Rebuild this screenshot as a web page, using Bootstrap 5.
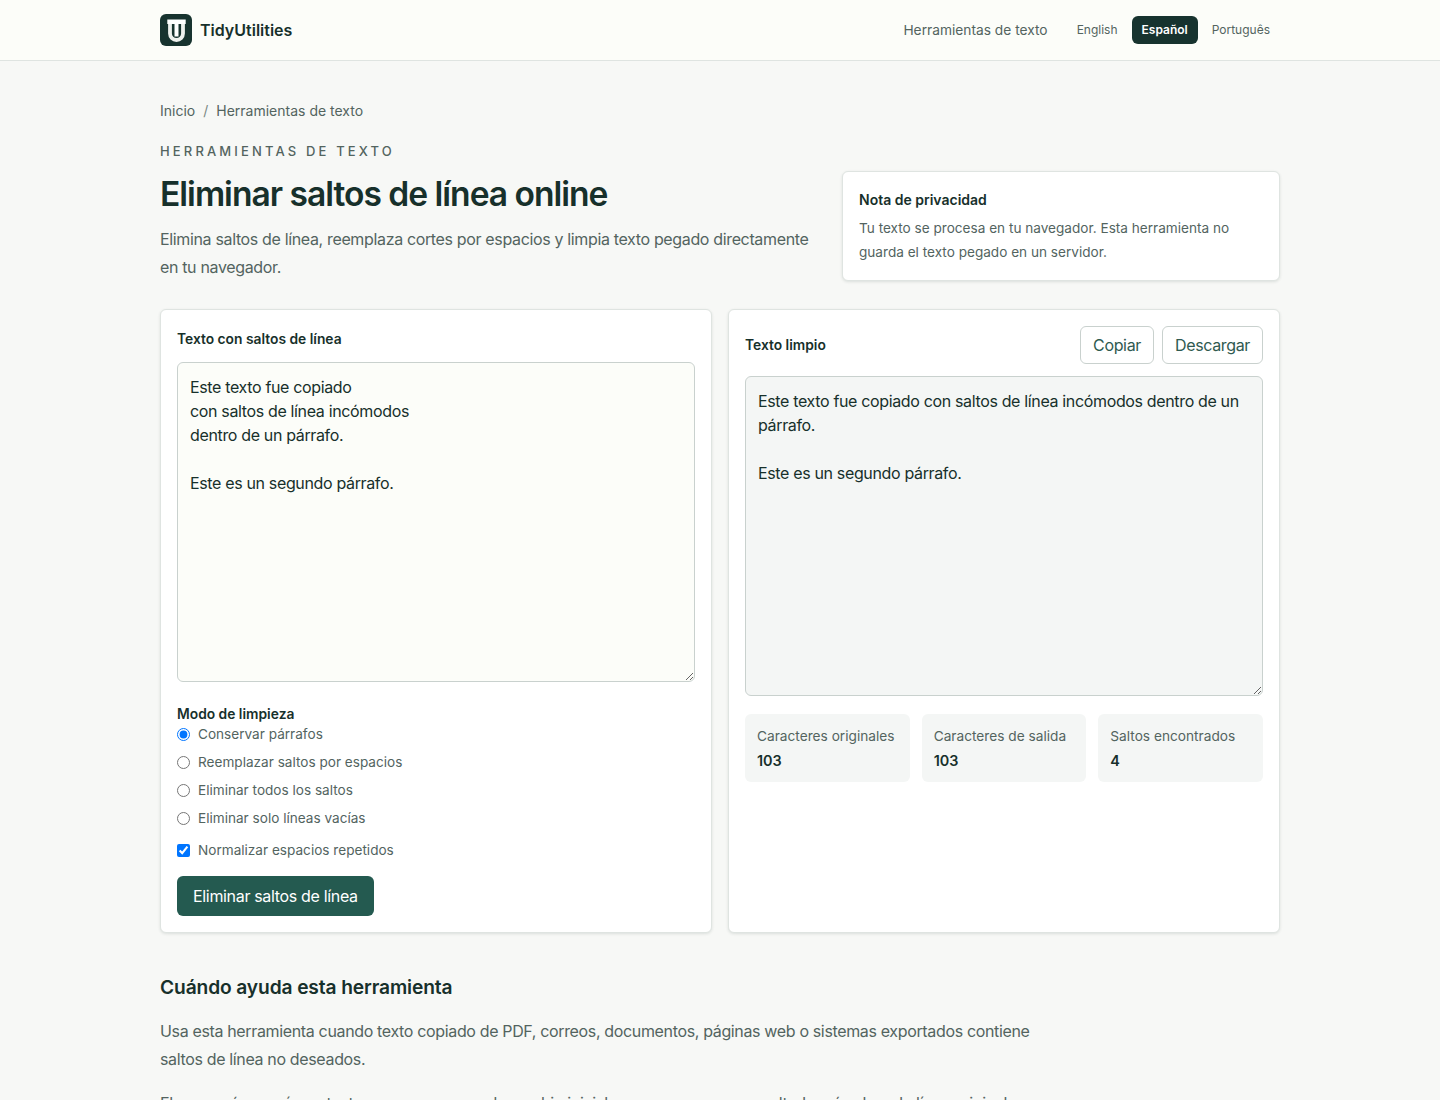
<!doctype html>
<html lang="es">
<head>
<meta charset="utf-8">
<title>Eliminar saltos de línea online</title>
<link rel="stylesheet" href="https://cdn.jsdelivr.net/npm/bootstrap@5.3.0/dist/css/bootstrap.min.css">
<style>
body{font-family:Inter,"Liberation Sans",sans-serif;background:#f7f8f6;color:#1a2f2b;font-size:16px;line-height:1.5}
.site-header{background:#fcfdf9;border-bottom:1px solid #dfe4e1;height:61px}
.wrap{width:1120px;margin:0 auto}
.logo{width:32px;height:32px;display:block}
.brand{font-size:16px;font-weight:600;color:#17302b;text-decoration:none;gap:8px}
.nav-tool{font-size:13.75px;color:#53645f;text-decoration:none}
.lang-group{margin-left:19px}
.lang{font-size:12px;color:#53645f;text-decoration:none;padding:0 10px;height:28px;line-height:28px;border-radius:6px;display:block}
.lang.active{background:#17332f;color:#fff;font-weight:600}
.crumbs{padding-top:39px;font-size:14px;line-height:21px;color:#53645f;gap:8px}
.crumbs a{color:#53645f;text-decoration:none}
.crumbs .sep{color:#7b8884}
.eyebrow{font-size:13px;font-weight:500;letter-spacing:3.15px;color:#53645f;margin:20px 0 0;line-height:20px}
h1.title{font-size:33.6px;font-weight:600;letter-spacing:-.03em;line-height:42px;color:#17302b;margin:12px 0 0}
.lead-text{font-size:16px;letter-spacing:-.35px;line-height:28px;color:#53645f;margin:10px 0 0}
.panel{background:#fff;border:1px solid #dfe4e1;border-radius:6px;box-shadow:0 1px 3px rgba(23,48,43,.12)}
.head-copy{width:660px}
.note{width:438px;height:110px;padding:16px;flex:none}
.note h2{font-size:14px;font-weight:600;line-height:24px;margin:0 0 4px;color:#17302b}
.note p{font-size:13.6px;line-height:24px;color:#53645f;margin:0}
.tools{grid-template-columns:552px 552px;gap:16px;margin-top:28px}
.tool{padding:16px;height:624px}
.lbl{font-size:13.8px;font-weight:600;color:#17302b;margin:0}
.lbl-top{display:block;line-height:26px;margin-bottom:10px}
textarea.form-control{height:320px;font-family:Inter,"Liberation Sans",sans-serif;font-size:16px;letter-spacing:-.35px;line-height:24px;color:#17302b;border-color:#c9d1ce;border-radius:6px;padding:12px}
textarea.in{background:#fcfdf9}
textarea.out{background:#f4f6f5;margin-top:12px}
textarea.form-control:focus{box-shadow:none}
.modes{margin-top:22px}
.modes .lbl{line-height:20px}
.form-check{font-size:13.6px;line-height:21px;color:#53645f;margin-bottom:7px;min-height:21px;padding-left:21px}
.form-check .form-check-input{appearance:auto;-webkit-appearance:auto;background:none;border:0;border-radius:0;width:13px;height:13px;margin-top:4px;margin-left:-21px}
.form-check.last{margin-top:11px;margin-bottom:0}
.btn-main{background:#245a50;color:#fff;font-size:16px;letter-spacing:-.33px;line-height:24px;padding:8px 16px;border:0;border-radius:6px;margin-top:15px}
.btn-main:hover{background:#245a50;color:#fff}
.btn-ghost{background:#fff;color:#2f5a50;border:1px solid #c9d1ce;font-size:16px;letter-spacing:-.35px;line-height:24px;padding:6px 12px;border-radius:6px}
.stats{grid-template-columns:repeat(3,1fr);gap:12px;margin-top:18px}
.stat{background:#f4f6f5;border-radius:6px;padding:12px;height:68px}
.stat div{font-size:13.7px;line-height:21px;color:#53645f}
.stat strong{display:block;font-size:14.4px;font-weight:600;line-height:21px;margin-top:3px;color:#17302b}
.prose{max-width:880px;margin-top:40px}
.prose h2{font-size:19.2px;letter-spacing:-.12px;font-weight:600;line-height:28px;margin:0 0 16px;color:#17302b}
.prose p{font-size:16px;letter-spacing:-.35px;line-height:28px;color:#53645f;margin:0 0 16px}
</style>
</head>
<body>
<header class="site-header d-flex align-items-center">
  <div class="wrap d-flex align-items-center justify-content-between">
    <a class="brand d-flex align-items-center" href="#">
      <svg class="logo" viewBox="0 0 32 32" aria-hidden="true"><rect width="32" height="32" rx="6" fill="#17332f"/><path d="M7.3 5.4h18.4V10h-7.2v12.5h-4V10H7.3z" fill="#fff"/><path d="M10 10v9.5a6.5 6.5 0 0 0 13 0V10" fill="none" stroke="#eef1ee" stroke-width="3.8"/></svg>
      <span>TidyUtilities</span>
    </a>
    <nav class="d-flex align-items-center">
      <a class="nav-tool" href="#">Herramientas de texto</a>
      <div class="d-flex align-items-center lang-group gap-1">
        <a class="lang" href="#">English</a>
        <a class="lang active" href="#">Español</a>
        <a class="lang" href="#">Português</a>
      </div>
    </nav>
  </div>
</header>
<main class="wrap">
  <nav class="crumbs d-flex" aria-label="breadcrumb"><a href="#">Inicio</a><span class="sep">/</span><a href="#">Herramientas de texto</a></nav>
  <div class="d-flex justify-content-between align-items-end">
    <div class="head-copy">
      <p class="eyebrow">HERRAMIENTAS DE TEXTO</p>
      <h1 class="title">Eliminar saltos de línea online</h1>
      <p class="lead-text">Elimina saltos de línea, reemplaza cortes por espacios y limpia texto pegado directamente en tu navegador.</p>
    </div>
    <aside class="panel note">
      <h2>Nota de privacidad</h2>
      <p>Tu texto se procesa en tu navegador. Esta herramienta no guarda el texto pegado en un servidor.</p>
    </aside>
  </div>
  <section class="tools d-grid">
    <div class="panel tool">
      <label class="lbl lbl-top" for="in">Texto con saltos de línea</label>
      <textarea id="in" class="form-control in">Este texto fue copiado
con saltos de línea incómodos
dentro de un párrafo.

Este es un segundo párrafo.</textarea>
      <div class="modes">
        <div class="lbl">Modo de limpieza</div>
        <div class="form-check"><input class="form-check-input" type="radio" name="m" id="m1" checked><label class="form-check-label" for="m1">Conservar párrafos</label></div>
        <div class="form-check"><input class="form-check-input" type="radio" name="m" id="m2"><label class="form-check-label" for="m2">Reemplazar saltos por espacios</label></div>
        <div class="form-check"><input class="form-check-input" type="radio" name="m" id="m3"><label class="form-check-label" for="m3">Eliminar todos los saltos</label></div>
        <div class="form-check"><input class="form-check-input" type="radio" name="m" id="m4"><label class="form-check-label" for="m4">Eliminar solo líneas vacías</label></div>
        <div class="form-check last"><input class="form-check-input" type="checkbox" id="n" checked><label class="form-check-label" for="n">Normalizar espacios repetidos</label></div>
      </div>
      <button class="btn btn-main" type="button">Eliminar saltos de línea</button>
    </div>
    <div class="panel tool">
      <div class="d-flex justify-content-between align-items-center">
        <label class="lbl" for="out">Texto limpio</label>
        <div class="d-flex gap-2"><button class="btn btn-ghost" type="button">Copiar</button><button class="btn btn-ghost" type="button">Descargar</button></div>
      </div>
      <textarea id="out" class="form-control out" readonly>Este texto fue copiado con saltos de línea incómodos dentro de un párrafo.

Este es un segundo párrafo.</textarea>
      <div class="stats d-grid">
        <div class="stat"><div>Caracteres originales</div><strong>103</strong></div>
        <div class="stat"><div>Caracteres de salida</div><strong>103</strong></div>
        <div class="stat"><div>Saltos encontrados</div><strong>4</strong></div>
      </div>
    </div>
  </section>
  <section class="prose">
    <h2>Cuándo ayuda esta herramienta</h2>
    <p>Usa esta herramienta cuando texto copiado de PDF, correos, documentos, páginas web o sistemas exportados contiene saltos de línea no deseados.</p>
    <p>El paso más común es texto que conserva cada cambio inicial y genera como un resultado más claro de línea original.</p>
  </section>
</main>
<script src="https://cdn.jsdelivr.net/npm/bootstrap@5.3.0/dist/js/bootstrap.bundle.min.js"></script>
</body>
</html>
